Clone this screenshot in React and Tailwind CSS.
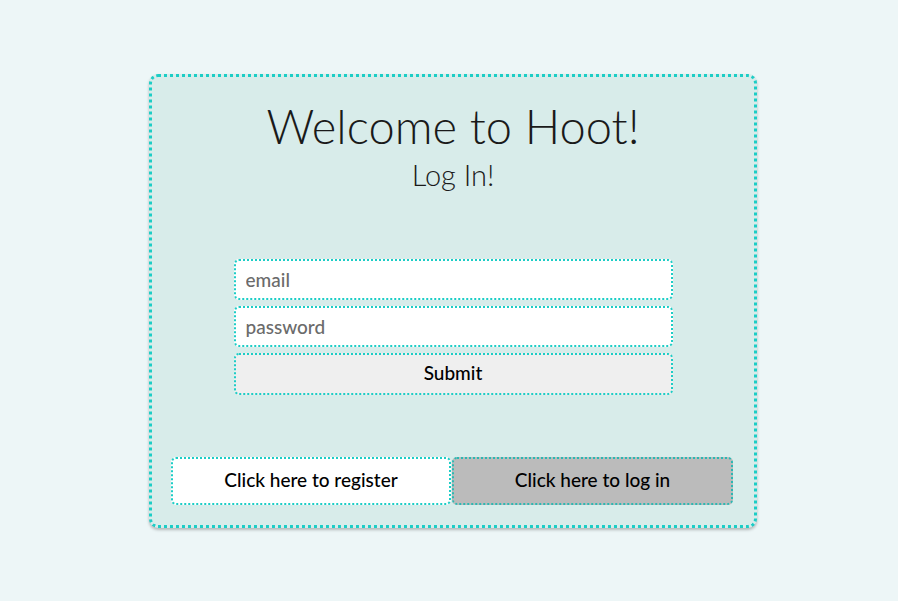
import React, { useState } from "react";

const App = () => {
  const [email, setEmail] = useState("");
  const [password, setPassword] = useState("");

  return (
    <div
      className="min-h-screen w-full bg-[#edf6f7] flex items-center justify-center pl-2"
      style={{ fontFamily: "Lato, 'Open Sans', sans-serif" }}
    >
      <div className="w-[608px] h-[454px] bg-[#d8ecea] border-[3px] border-dotted border-[#1ccdc6] rounded-[9px] shadow-[0_2px_3px_rgba(0,0,0,0.25)] flex flex-col px-[19px]">
        <h1 className="text-center text-[47px] font-light text-[#1a1a1a] leading-none mt-[26px]">
          Welcome to Hoot!
        </h1>
        <h2 className="text-center text-[29px] font-light text-[#1a1a1a] leading-none mt-[10px]">
          Log In!
        </h2>

        {/* login form */}
        <form
          className="w-[439px] mx-auto mt-[70px] flex flex-col gap-[6px]"
          onSubmit={(e) => e.preventDefault()}
        >
          <input
            type="text"
            placeholder="email"
            value={email}
            onChange={(e) => setEmail(e.target.value)}
            className="h-[41px] bg-white border-2 border-dotted border-[#1ccdc6] rounded-[5px] px-[10px] text-[19px] font-medium text-black placeholder:text-[#6b6b6b] outline-none"
          />
          <input
            type="password"
            placeholder="password"
            value={password}
            onChange={(e) => setPassword(e.target.value)}
            className="h-[41px] bg-white border-2 border-dotted border-[#1ccdc6] rounded-[5px] px-[10px] text-[19px] font-medium text-black placeholder:text-[#6b6b6b] outline-none"
          />
          <button
            type="submit"
            className="h-[42px] bg-[#efefef] border-2 border-dotted border-[#1ccdc6] rounded-[5px] text-[19px] font-medium text-black"
          >
            Submit
          </button>
        </form>

        <div className="mt-auto mb-[20px] flex gap-px">
          <button className="w-[280px] h-[48px] bg-white border-2 border-dotted border-[#1ccdc6] rounded-[5px] text-[19px] font-medium text-black">
            Click here to register
          </button>
          <button className="w-[281px] h-[48px] bg-[#bbbbbb] border-2 border-dotted border-[#2cb8b3] rounded-[5px] text-[19px] font-medium text-black">
            Click here to log in
          </button>
        </div>
      </div>
    </div>
  );
};

export default App;
